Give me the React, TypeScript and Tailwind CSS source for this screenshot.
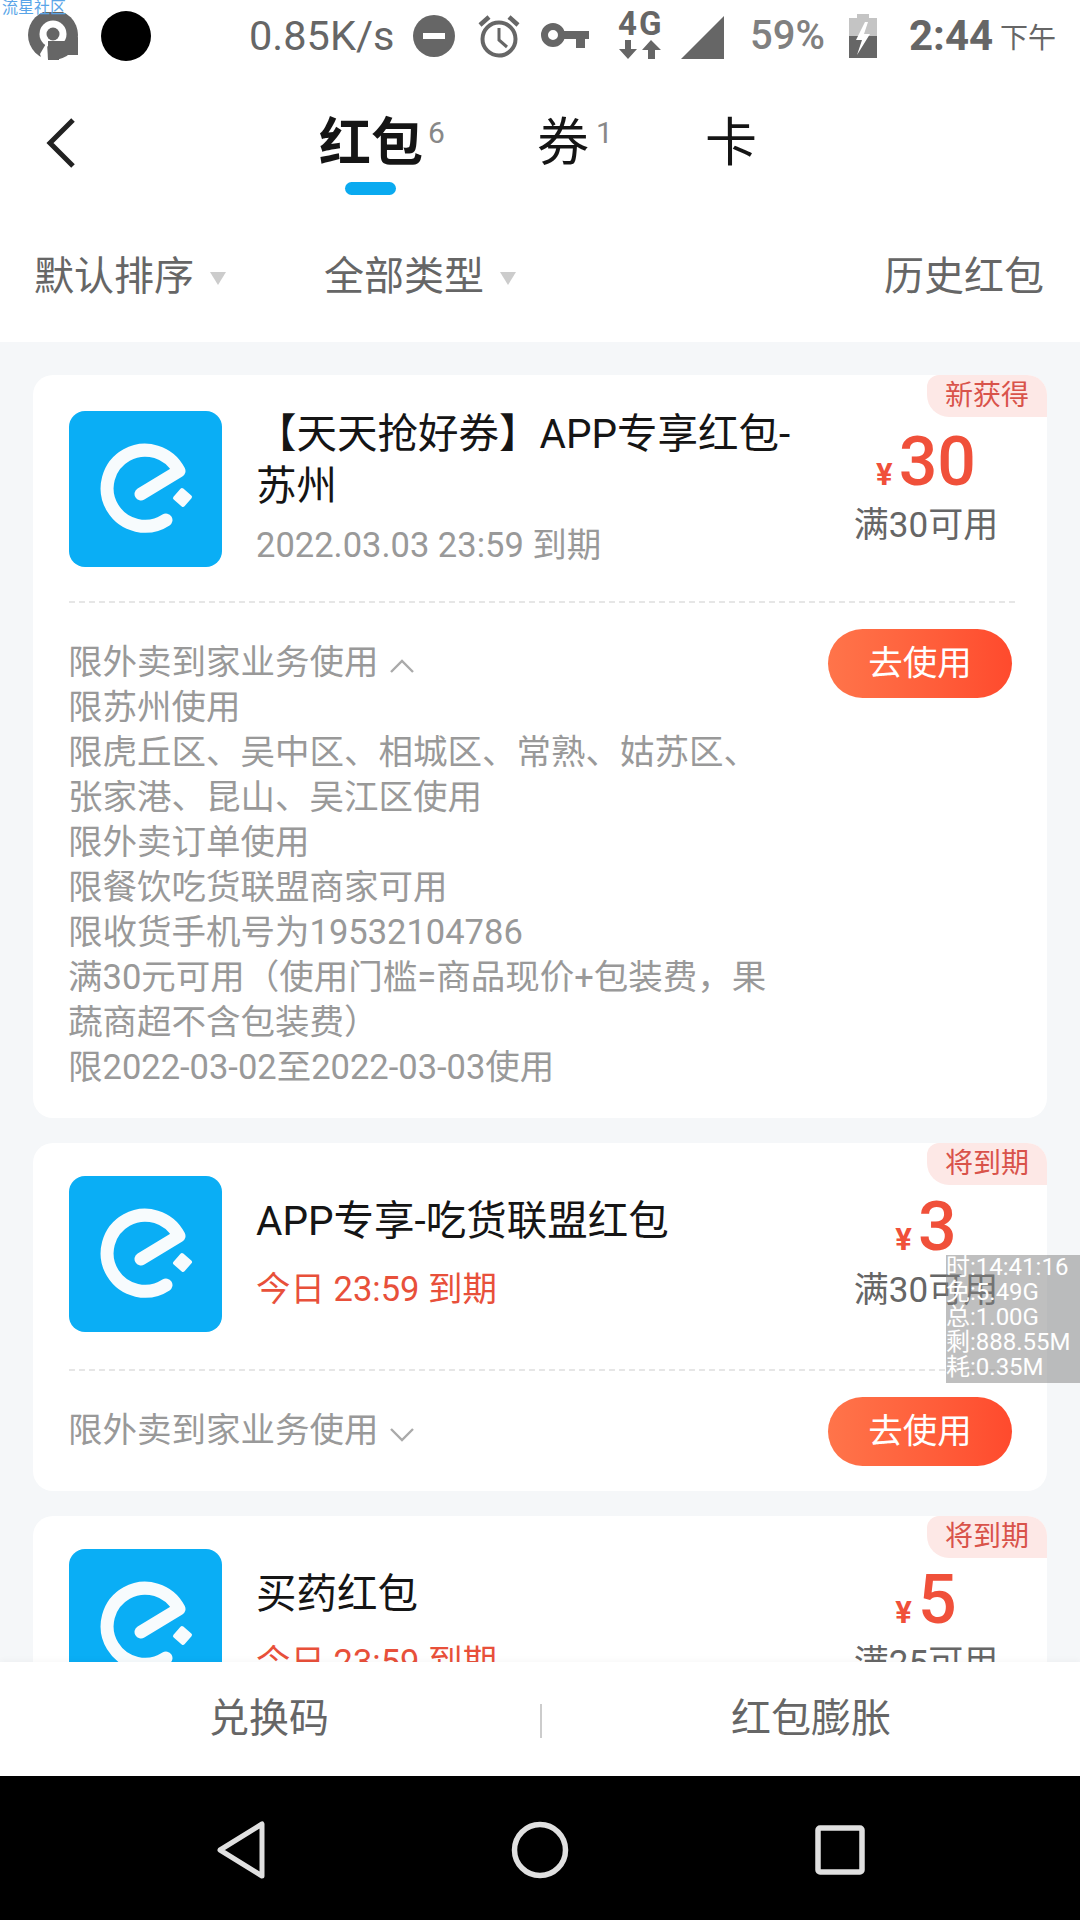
function Logo() {
    return (
        <div className="w-[153px] h-[156px] shrink-0 rounded-[16px] bg-[#0aaef5]">
            <svg width="153" height="156" viewBox="0 0 153 156" fill="none">
                <path d="M72 83 L110 60 A38 38 0 1 0 97 109" stroke="#f7fbfd" strokeWidth="13" strokeLinecap="round" strokeLinejoin="round" />
                <path d="M113 79 L121 86 L114 94 L106 87 Z" fill="#f7fbfd" stroke="#f7fbfd" strokeWidth="4" strokeLinejoin="round" />
            </svg>
        </div>
    );
}

function UseButton() {
    return (
        <div className="w-[184px] h-[69px] shrink-0 rounded-full bg-gradient-to-r from-[#ff744a] to-[#ff4a2d] flex items-center justify-center text-[34.5px] text-white mb-[25px]">
            去使用
        </div>
    );
}

type CardProps = {
    tag: string;
    title: string[];
    date: string;
    dateRed?: boolean;
    amount: string;
    limit: string;
    lines?: string[];
    open?: boolean;
    topPad: string;
    dateGap: string;
    lineGap: string;
};

function Card({ tag, title, date, dateRed, amount, limit, lines, open, topPad, dateGap, lineGap }: CardProps) {
    return (
        <div className="relative w-[1014px] shrink-0 rounded-[20px] bg-white px-[36px]">
            <div className="absolute top-0 right-0 h-[42px] w-[120px] rounded-tl-[12px] rounded-bl-[22px] rounded-tr-[20px] bg-[#fde8e6] flex items-center justify-center text-[28px] text-[#d9534a]">
                {tag}
            </div>
            <div className={`flex items-start ${topPad}`}>
                <Logo />
                <div className="ml-[34px] flex-1 h-[156px] pb-[5px] flex flex-col justify-center">
                    <div className="text-[40.5px] leading-[52px] text-[#151515] whitespace-nowrap">
                        {title.map((t) => <div key={t}>{t}</div>)}
                    </div>
                    <div className={`${dateGap} text-[34.5px] leading-[40px] whitespace-nowrap ${dateRed ? 'text-[#e8503a]' : 'text-[#999999]'}`}>
                        {date}
                    </div>
                </div>
                <div className="w-[200px] shrink-0 mr-[-15px] flex flex-col items-center">
                    <div className="flex items-baseline h-[76px] mt-[13px]">
                        <span className="text-[31px] font-bold text-[#f0503a] mr-[6px]">¥</span>
                        <span className="text-[68px] leading-[76px] font-medium text-[#f0503a]">{amount}</span>
                    </div>
                    <div className="mt-[6px] text-[35px] leading-[40px] text-[#666666] whitespace-nowrap">{limit}</div>
                </div>
            </div>
            <div className={`${lineGap} border-t-2 border-dashed border-[#e6e6e6] w-[946px]`} />
            <div className="flex items-start justify-between pt-[26px]">
                <div className="ml-[-1px] text-[34.5px] leading-[45px] text-[#999999] pt-[11px] pb-[28px] whitespace-nowrap">
                    <div className="flex items-center">
                        限外卖到家业务使用
                        <svg width="26" height="16" viewBox="0 0 26 16" fill="none" className="ml-[10px] mt-[6px] shrink-0">
                            {open
                                ? <path d="M2 14 L13 3 L24 14" stroke="#aaaaaa" strokeWidth="2.4" />
                                : <path d="M2 3 L13 14 L24 3" stroke="#aaaaaa" strokeWidth="2.4" />}
                        </svg>
                    </div>
                    {lines?.map((l) => <div key={l}>{l}</div>)}
                </div>
                <div className="mr-[-1px]">
                    <UseButton />
                </div>
            </div>
        </div>
    );
}

function StatusBar() {
    return (
        <div className="h-[72px] flex items-center text-[#666666] shrink-0 pl-[28px]">
            <svg width="50" height="48" viewBox="0 0 50 48" className="shrink-0">
                <circle cx="25" cy="23" r="25" fill="#666666" />
                <circle cx="25" cy="22" r="13.5" fill="#ffffff" />
                <circle cx="25" cy="22" r="6.5" fill="#666666" />
                <path d="M20 29 H38 L50 25 V43 H31 V48 H20 Z" fill="#666666" />
                <path d="M19 30 L12 42 L14 48 L20 48 Z" fill="#ffffff" />
            </svg>
            <div className="w-[50px] h-[50px] rounded-full bg-black ml-[23px] shrink-0" />
            <div className="ml-[98px] w-[146px] text-[41.5px] leading-none whitespace-nowrap">0.85K/s</div>
            <svg width="42" height="42" viewBox="0 0 42 42" className="ml-[18px] shrink-0">
                <circle cx="21" cy="21" r="21" fill="#666666" />
                <rect x="10" y="18" width="22" height="6" fill="#ffffff" />
            </svg>
            <svg width="42" height="44" viewBox="0 0 42 44" fill="none" className="ml-[23px] shrink-0">
                <circle cx="21" cy="25" r="16.5" stroke="#666666" strokeWidth="4" />
                <path d="M21 14 V26 L29 33" stroke="#666666" strokeWidth="3" />
                <path d="M2 11 L11 3 M40 11 L31 3" stroke="#666666" strokeWidth="4.5" />
            </svg>
            <svg width="48" height="26" viewBox="0 0 48 26" className="ml-[21px] shrink-0">
                <circle cx="12" cy="12" r="8.5" fill="none" stroke="#666666" strokeWidth="7" />
                <path d="M22 8 H48 V16 H44 V25 H35 V16 H22 Z" fill="#666666" />
            </svg>
            <div className="ml-[29px] w-[47px] h-[48px] relative shrink-0">
                <div className="text-[33px] leading-[28px] font-bold whitespace-nowrap tracking-[2px] mt-[-2px]">4G</div>
                <svg width="47" height="20" viewBox="0 0 47 20" className="absolute left-0 top-[28px]">
                    <path d="M7 0 H13 V9 H19 L10 19 L1 9 H7 Z M30 19 V10 H24 L33 0 L43 10 H37 V19 Z" fill="#666666" />
                </svg>
            </div>
            <svg width="43" height="43" viewBox="0 0 43 43" className="ml-[16px] mt-[2px] shrink-0">
                <path d="M43 0 V43 H0 Z" fill="#666666" />
            </svg>
            <div className="ml-[26px] w-[76px] text-[40px] leading-none font-medium text-[#808080] whitespace-nowrap">59%</div>
            <svg width="28" height="44" viewBox="0 0 28 44" className="ml-[23px] shrink-0">
                <path d="M8 0 H20 V4 H28 V22 H0 V4 H8 Z" fill="#c4c4c4" />
                <path d="M0 22 H28 V44 H0 Z" fill="#666666" />
                <path d="M16 8 L7 26 H13 L8 41 L21 20 H15 L19 8 Z" fill="#ffffff" />
            </svg>
            <div className="ml-[32px] w-[81px] text-[42px] leading-none font-bold whitespace-nowrap">2:44</div>
            <div className="ml-[10px] mt-[6px] text-[28px] leading-none">下午</div>
        </div>
    );
}

function Header() {
    return (
        <div className="bg-white shrink-0">
            <div className="h-[136px] flex items-start pl-[46px] pt-[43px]">
                <svg width="30" height="50" viewBox="0 0 30 50" fill="none" className="shrink-0 mt-[3px]">
                    <path d="M27 2 L4 25 L27 48" stroke="#222222" strokeWidth="5" />
                </svg>
                <div className="relative ml-[243px] w-[104px] shrink-0 text-[52px] leading-[58px] font-bold text-[#151515]">
                    红包
                    <span className="absolute left-[109px] top-[3px] text-[30px] leading-[30px] font-normal text-[#888888]">6</span>
                    <div className="absolute left-[26px] top-[67px] w-[51px] h-[13px] rounded-full bg-[#0aaaf0]" />
                </div>
                <div className="relative ml-[114px] text-[52px] leading-[58px] text-[#151515]">
                    券
                    <span className="absolute left-[59px] top-[3px] text-[30px] leading-[30px] text-[#888888]">1</span>
                </div>
                <div className="ml-[116px] text-[52px] leading-[58px] text-[#151515]">卡</div>
            </div>
            <div className="h-[134px] flex items-start pl-[34px] pr-[36px] pt-[39px] text-[40px] leading-[60px] text-[#666666]">
                默认排序
                <span className="mt-[25px] ml-[16px] w-0 h-0 border-x-[8px] border-x-transparent border-t-[13px] border-t-[#cccccc]" />
                <span className="ml-[98px]">全部类型</span>
                <span className="mt-[25px] ml-[16px] w-0 h-0 border-x-[8px] border-x-transparent border-t-[13px] border-t-[#cccccc]" />
                <span className="ml-auto">历史红包</span>
            </div>
        </div>
    );
}

export default function App() {
    return (
        <div className="relative w-[1080px] h-[1920px] overflow-hidden flex flex-col bg-white font-['Roboto','Noto_Sans_CJK_SC',sans-serif]">
            <StatusBar />
            <Header />

            {/* list is cut off by the bottom bar */}
            <div className="flex-1 min-h-0 overflow-hidden bg-[#f5f7f9] flex flex-col items-center gap-[25px] pt-[33px]">
                <Card
                    tag="新获得"
                    title={['【天天抢好券】APP专享红包-', '苏州']}
                    date="2022.03.03 23:59 到期"
                    amount="30"
                    limit="满30可用"
                    open
                    topPad="pt-[36px]"
                    dateGap="mt-[13px]"
                    lineGap="mt-[34px]"
                    lines={[
                        '限苏州使用',
                        '限虎丘区、吴中区、相城区、常熟、姑苏区、',
                        '张家港、昆山、吴江区使用',
                        '限外卖订单使用',
                        '限餐饮吃货联盟商家可用',
                        '限收货手机号为19532104786',
                        '满30元可用（使用门槛=商品现价+包装费，果',
                        '蔬商超不含包装费）',
                        '限2022-03-02至2022-03-03使用',
                    ]}
                />
                <Card tag="将到期" title={['APP专享-吃货联盟红包']} date="今日 23:59 到期" dateRed amount="3" limit="满30可用" topPad="pt-[33px]" dateGap="mt-[22px]" lineGap="mt-[37px]" />
                <Card tag="将到期" title={['买药红包']} date="今日 23:59 到期" dateRed amount="5" limit="满25可用" topPad="pt-[33px]" dateGap="mt-[22px]" lineGap="mt-[37px]" />
            </div>

            <div className="relative h-[114px] shrink-0 bg-white flex items-center text-[40px] text-[#666666] shadow-[0_-2px_6px_rgba(0,0,0,0.03)]">
                <div className="flex-1 text-center">兑换码</div>
                <div className="w-[2px] h-[34px] ml-[2px] bg-[#cccccc] mt-[4px]" />
                <div className="flex-1 text-center">红包膨胀</div>
            </div>

            <div className="h-[144px] shrink-0 bg-black flex items-center pl-[217px] pt-[4px]">
                <svg width="48" height="58" viewBox="0 0 48 58" fill="none" className="shrink-0">
                    <path d="M45 3 V55 L3 29 Z" stroke="#e0e0e0" strokeWidth="5" strokeLinejoin="round" />
                </svg>
                <svg width="58" height="58" viewBox="0 0 58 58" fill="none" className="ml-[246px] shrink-0">
                    <circle cx="29" cy="29" r="25.5" stroke="#e0e0e0" strokeWidth="5.5" />
                </svg>
                <svg width="50" height="50" viewBox="0 0 50 50" fill="none" className="ml-[246px] shrink-0">
                    <rect x="3" y="3" width="44" height="44" rx="2" stroke="#e0e0e0" strokeWidth="5.5" />
                </svg>
            </div>

            {/* overlays from other apps */}
            <div className="absolute left-[2px] top-[-1px] text-[16px] leading-[18px] text-[#5aa5e8] whitespace-nowrap">流星社区</div>
            <div className="absolute left-[946px] top-[1255px] w-[134px] h-[128px] bg-[#808080]/50 text-[24px] leading-[25px] text-white whitespace-nowrap">
                <div>时:14:41:16</div>
                <div>免:5.49G</div>
                <div>总:1.00G</div>
                <div>剩:888.55M</div>
                <div>耗:0.35M</div>
            </div>
        </div>
    );
}
